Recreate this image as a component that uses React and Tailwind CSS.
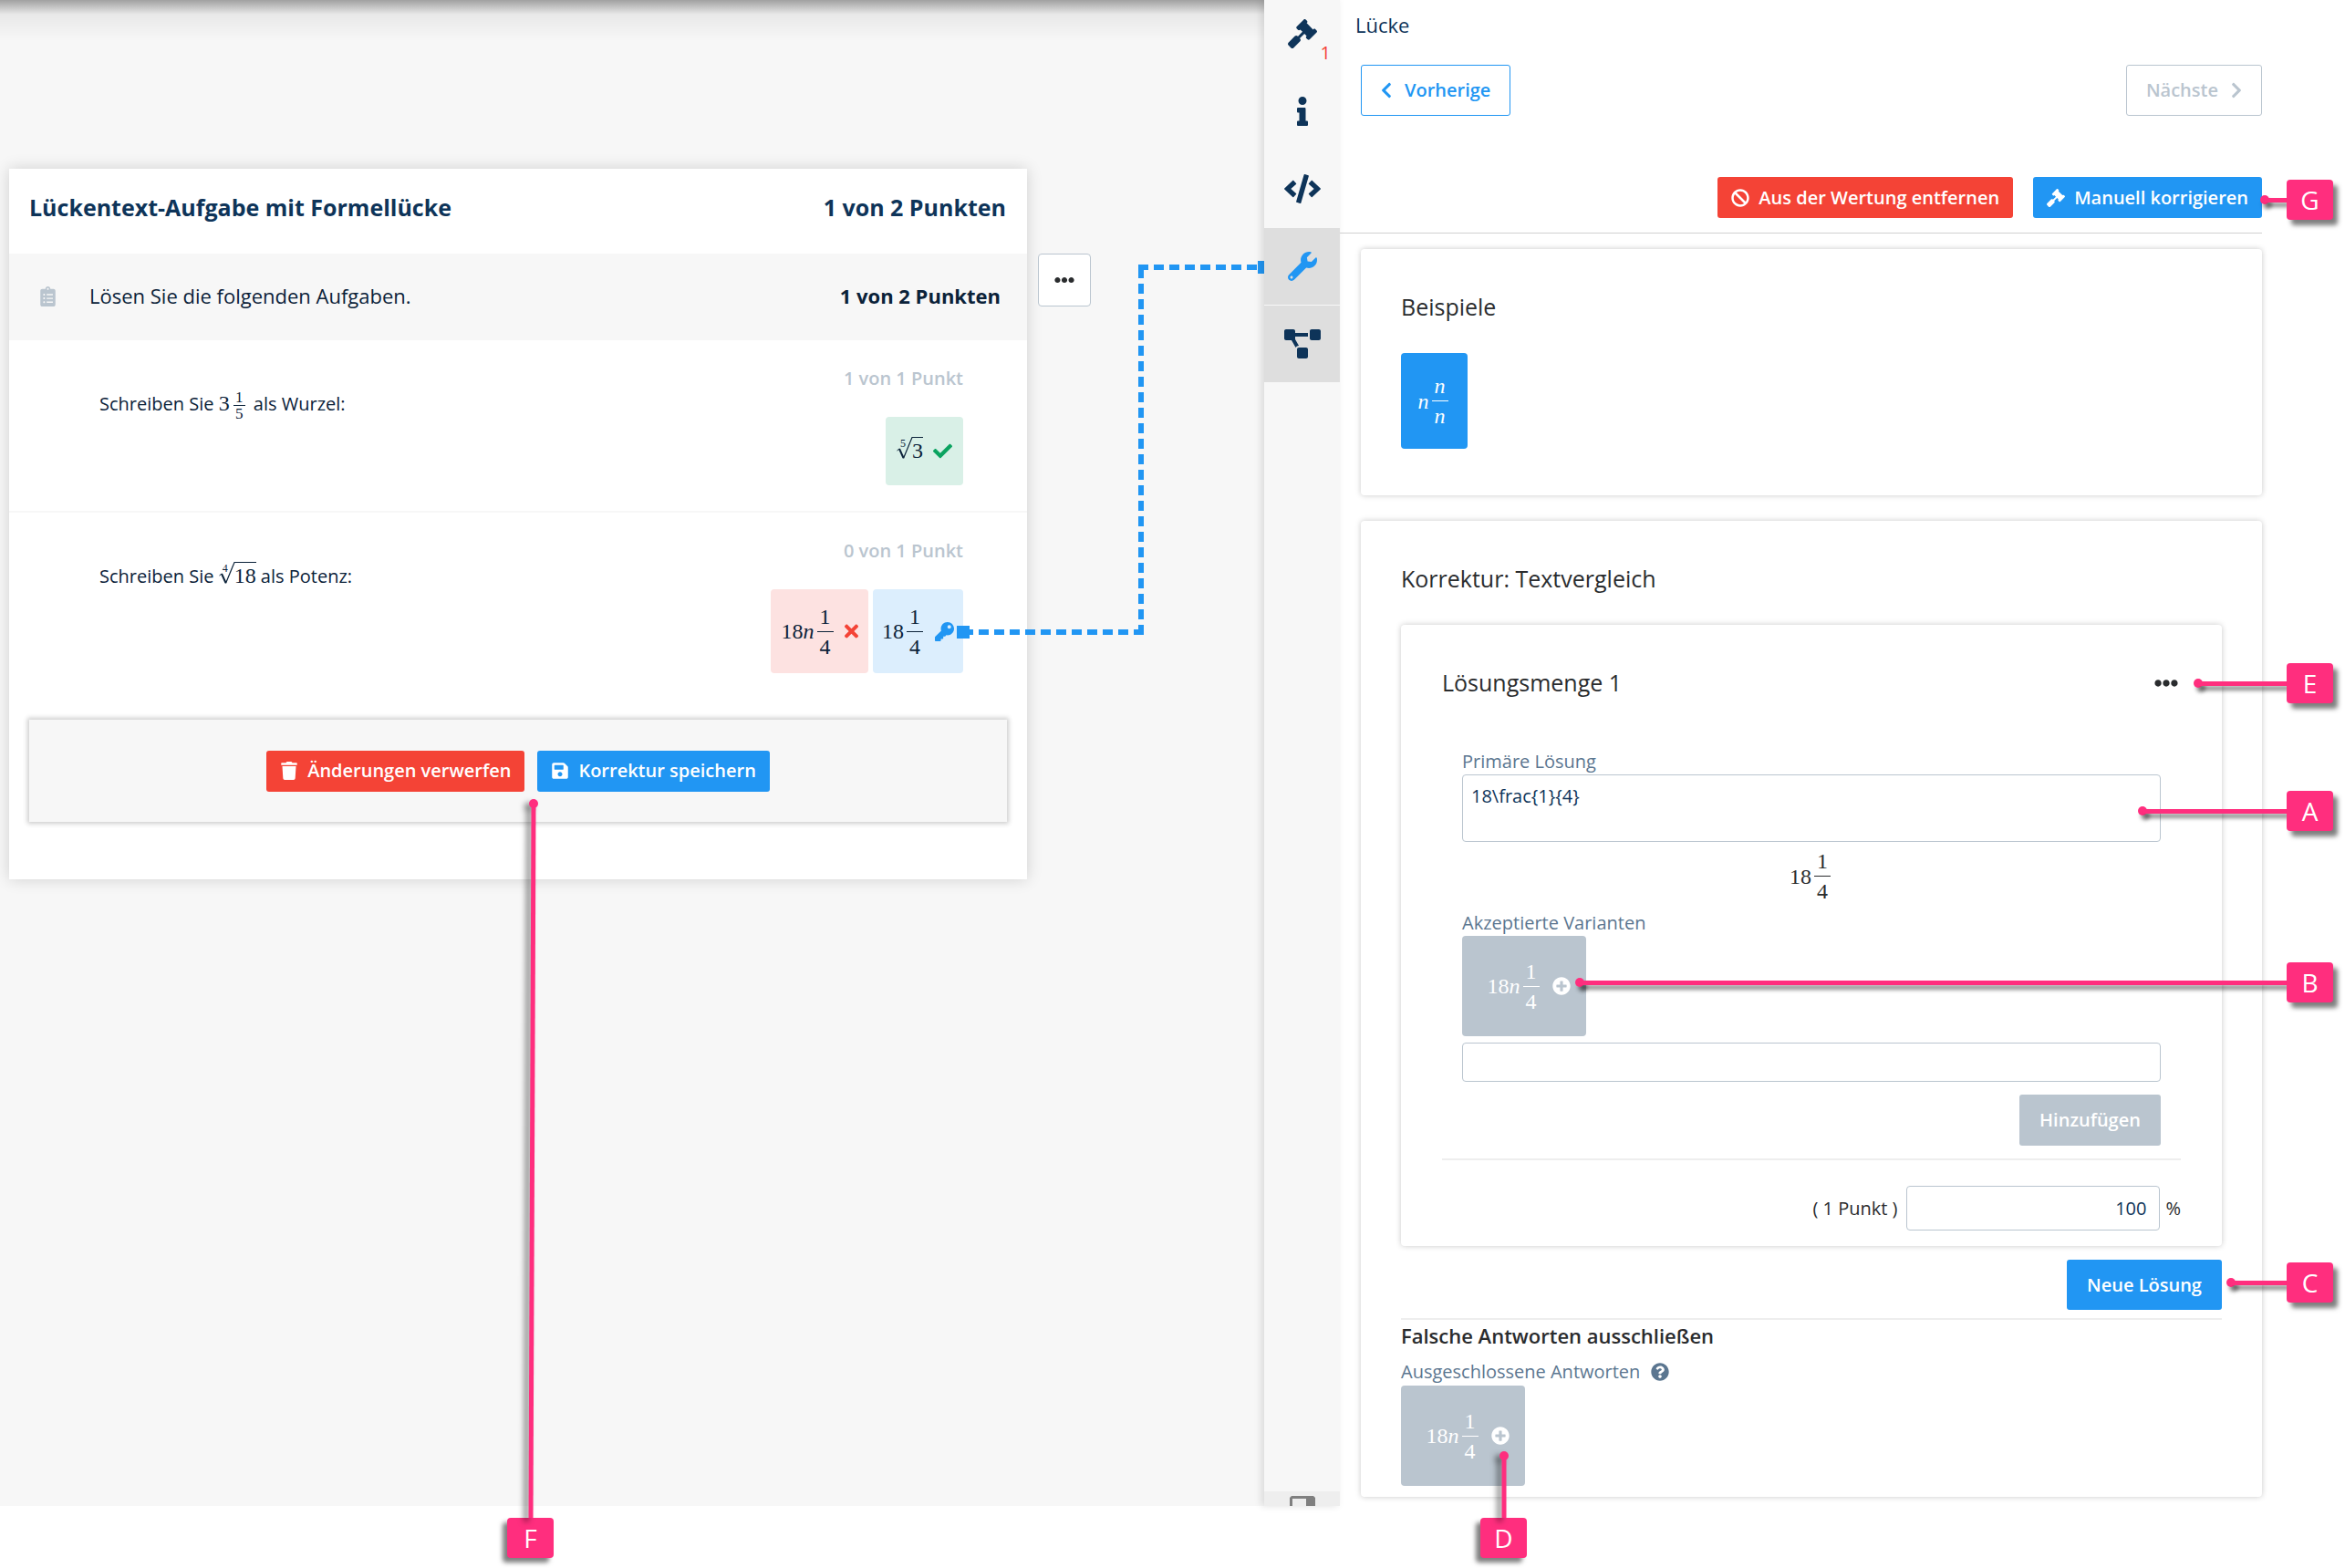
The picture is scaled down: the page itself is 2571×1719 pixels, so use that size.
import React from "react";
import {
  FaBan,
  FaCheck,
  FaChevronLeft,
  FaChevronRight,
  FaClipboardList,
  FaCode,
  FaEllipsisH,
  FaGavel,
  FaInfo,
  FaKey,
  FaPlusCircle,
  FaProjectDiagram,
  FaQuestionCircle,
  FaSave,
  FaTimes,
  FaTrash,
  FaWrench,
} from "react-icons/fa";

const Num = ({ children }) => (
  <span className="font-['Liberation_Serif',serif] text-[24px] leading-[24px]">{children}</span>
);

const Var = () => (
  <span className="font-['Liberation_Serif',serif] text-[24px] leading-[24px] italic">n</span>
);

const Frac = ({ top, bottom, small }) =>
  small ? (
    <span className="mx-1 inline-flex flex-col items-center align-middle font-['Liberation_Serif',serif] text-[17px] leading-[17px]">
      <span className="w-[13px] border-b border-current text-center">{top}</span>
      <span>{bottom}</span>
    </span>
  ) : (
    <span className="mx-[3px] flex flex-col items-center">
      <span className="w-[18px] border-b border-current pb-1 text-center leading-none">{top}</span>
      <span className="pt-1 leading-none">{bottom}</span>
    </span>
  );

const Root = ({ index, children }) => (
  <span className="relative inline-flex pl-[17px]">
    <svg
      className="absolute top-[-1px] left-0"
      width="18"
      height="26"
      viewBox="0 0 18 26"
      fill="none"
      stroke="currentColor"
    >
      <path d="M0.5 16 L3 14" strokeWidth="1" />
      <path d="M3 14 L7.5 24" strokeWidth="2" />
      <path d="M7.5 24.5 L17 1.5 H18" strokeWidth="1.2" />
    </svg>
    <span className="absolute top-px left-[4px] font-['Liberation_Serif',serif] text-[12px] leading-[12px]">
      {index}
    </span>
    <span className="border-t border-current">
      <Num>{children}</Num>
    </span>
  </span>
);

const Mixed = ({ variable }) => (
  <span className="flex items-center">
    <Num>18</Num>
    {variable && <Var />}
    <Frac top={<Num>1</Num>} bottom={<Num>4</Num>} />
  </span>
);

const Button = ({ color, icon, children }) => (
  <button
    className={`flex h-[45px] items-center gap-[10px] rounded-[3px] px-[15px] text-[20px] font-semibold text-white ${
      color === "red" ? "bg-[#f44336]" : "bg-[#2196f3]"
    }`}
  >
    {icon}
    {children}
  </button>
);

const Suggestion = () => (
  <button className="flex h-[110px] w-[136px] items-center justify-center gap-[11px] rounded-[4px] bg-[#bac5cf] pl-[10px] text-white">
    <Mixed variable />
    <FaPlusCircle className="size-5" />
  </button>
);

// pointer that ends in the margin right of the panel
const Callout = ({ letter, place, line }) => (
  <div className={`absolute right-[13px] z-10 flex items-center ${place}`}>
    <span className="-mr-[5px] size-[10px] rounded-full bg-[#ff2e7e] shadow-[3px_5px_4px_rgba(0,0,0,0.45)]" />
    <span className={`h-[5px] bg-[#ff2e7e] shadow-[3px_5px_4px_rgba(0,0,0,0.45)] ${line}`} />
    <span className="flex h-11 w-[51px] items-center justify-center rounded-[4px] bg-[#ff2e7e] text-[28px] leading-none text-white shadow-[5px_6px_5px_rgba(0,0,0,0.5)]">
      {letter}
    </span>
  </div>
);

// same, with the letter below; lean is how far the dot sits right of the letter
const CalloutDown = ({ letter, place, length, lean }) => (
  <div className={`absolute z-10 flex flex-col items-center ${place}`}>
    <svg
      width="30"
      height={length}
      className="overflow-visible drop-shadow-[-5px_4px_3px_rgba(0,0,0,0.5)]"
      stroke="#ff2e7e"
      strokeWidth="5"
    >
      <line x1={15 + lean} y1="5" x2="15" y2={length} />
      <circle cx={15 + lean} cy="5" r="5" fill="#ff2e7e" stroke="none" />
    </svg>
    <span className="flex h-11 w-[51px] items-center justify-center rounded-[4px] bg-[#ff2e7e] text-[28px] leading-none text-white shadow-[-5px_5px_5px_rgba(0,0,0,0.5)]">
      {letter}
    </span>
  </div>
);

const tabs = [
  { label: "Bewertung", icon: <FaGavel className="size-8" />, badge: "1" },
  { label: "Information", icon: <FaInfo className="size-8" /> },
  { label: "Quelltext", icon: <FaCode className="h-8 w-10" /> },
  { label: "Korrektur", icon: <FaWrench className="size-8" />, active: true },
  { label: "Struktur", icon: <FaProjectDiagram className="h-8 w-10" />, open: true },
];

const TaskCard = () => (
  <section className="mt-[185px] ml-[10px] w-[1116px] bg-white pb-[63px] shadow-[0_0_16px_rgba(0,0,0,0.16)]">
    <header className="flex h-[93px] items-center justify-between pr-[23px] pb-[8px] pl-[22px] text-[25px] font-bold text-[#0e3459]">
      <h1>Lückentext-Aufgabe mit Formellücke</h1>
      <span>1 von 2 Punkten</span>
    </header>
    <div className="flex h-[95px] items-center bg-[#f7f7f7] pr-[29px] pb-[2px] pl-[34px] text-[22px]">
      <FaClipboardList className="h-[22px] w-[17px] text-[#bac5cf]" />
      <p className="ml-[37px] flex-1">Lösen Sie die folgenden Aufgaben.</p>
      <span className="font-bold">1 von 2 Punkten</span>
    </div>
    <div className="flex h-[189px] justify-between border-b-2 border-[#f7f7f7] pr-[70px] pl-[99px] text-[20px]">
      <p className="pt-[54px]">
        Schreiben Sie <Num>3</Num>
        <Frac small top="1" bottom="5" /> als Wurzel:
      </p>
      <div className="flex flex-col items-end gap-[27px] pt-[27px]">
        <span className="font-semibold text-[#bac5cf]">1 von 1 Punkt</span>
        <span className="flex h-[75px] w-[85px] items-center justify-center gap-[11px] rounded-[4px] bg-[#d9f0e7]">
          <Root index="5">3</Root>
          <FaCheck className="size-[21px] text-[#0ba360]" />
        </span>
      </div>
    </div>
    <div className="flex h-[227px] justify-between pr-[70px] pl-[99px] text-[20px]">
      <p className="pt-[54px]">
        Schreiben Sie <Root index="4">18</Root> als Potenz:
      </p>
      <div className="flex flex-col items-end gap-[27px] pt-[27px]">
        <span className="font-semibold text-[#bac5cf]">0 von 1 Punkt</span>
        <div className="flex gap-[5px]">
          <span className="flex h-[92px] w-[107px] items-center justify-center gap-[9px] rounded-[4px] bg-[#fde2e1]">
            <Mixed variable />
            <FaTimes className="h-[22px] w-[15px] text-[#f44336]" />
          </span>
          <span className="flex h-[92px] w-[99px] items-center justify-center gap-[10px] rounded-[4px] bg-[#dceefd]">
            <Mixed />
            <FaKey className="size-[21px] text-[#2196f3]" />
          </span>
        </div>
      </div>
    </div>
    <footer className="mx-[22px] flex h-[112px] items-center justify-center gap-[14px] bg-[#f7f7f7] shadow-[0_0_5px_2px_rgba(0,0,0,0.2)]">
      <Button color="red" icon={<FaTrash className="size-5" />}>
        Änderungen verwerfen
      </Button>
      <Button icon={<FaSave className="size-5" />}>Korrektur speichern</Button>
    </footer>
  </section>
);

const SolutionCard = () => (
  <section className="rounded-[4px] bg-white px-[45px] pb-[17px] shadow-[0_0_6px_rgba(0,0,0,0.22)]">
    <div className="flex h-[130px] items-center justify-between pr-[3px] pb-[2px]">
      <h3 className="text-[25px]">Lösungsmenge 1</h3>
      <button aria-label="Mehr">
        <FaEllipsisH className="size-[26px]" />
      </button>
    </div>
    <div className="flex flex-col px-[22px] text-[20px]">
      <label htmlFor="primary" className="mt-[6px] leading-[28px] text-[#5b7690]">
        Primäre Lösung
      </label>
      <textarea
        id="primary"
        className="h-[74px] resize-none rounded-[4px] border border-[#bac5cf] px-[9px] py-[8px] text-[#0e3459]"
        defaultValue="18\frac{1}{4}"
      />
      <div className="flex h-[75px] items-center justify-center">
        <Mixed />
      </div>
      <label htmlFor="variant" className="leading-[28px] text-[#5b7690]">
        Akzeptierte Varianten
      </label>
      <Suggestion />
      <input id="variant" className="mt-[7px] h-[43px] rounded-[4px] border border-[#bac5cf] px-[9px]" />
      <button className="mt-[14px] h-[56px] w-[155px] self-end rounded-[3px] bg-[#bac5cf] font-semibold text-white">
        Hinzufügen
      </button>
    </div>
    <div className="mt-[14px] flex items-center justify-end gap-[6px] border-t-2 border-[#eeeeee] pt-[28px] text-[20px]">
      <label htmlFor="percent">( 1 Punkt )</label>
      <input
        id="percent"
        className="ml-1 h-[49px] w-[278px] rounded-[4px] border border-[#bac5cf] px-[14px] text-right text-[#0e3459]"
        defaultValue="100"
      />
      <span>%</span>
    </div>
  </section>
);

const CorrectionPanel = () => (
  <div className="min-w-0 flex-1 pr-[91px] pb-[10px] text-[#2a2c2e]">
    <h2 className="pt-[12px] pl-[17px] text-[22px] leading-[30px] text-[#0e3459]">Lücke</h2>
    <div className="mt-[29px] flex justify-between pl-[23px] text-[20px] font-semibold">
      <button className="flex h-[56px] items-center gap-[14px] rounded-[3px] border border-[#2196f3] px-[21px] text-[#2196f3]">
        <FaChevronLeft className="h-5 w-3" />
        Vorherige
      </button>
      <button
        disabled
        className="flex h-[56px] items-center gap-[14px] rounded-[3px] border border-[#bac5cf] px-[21px] text-[#bac5cf]"
      >
        Nächste
        <FaChevronRight className="h-5 w-3" />
      </button>
    </div>
    <div className="mt-[67px] flex justify-end gap-[22px] border-b border-[#d0d0d0] pb-[16px]">
      <Button color="red" icon={<FaBan className="size-5" />}>
        Aus der Wertung entfernen
      </Button>
      <Button icon={<FaGavel className="size-5" />}>Manuell korrigieren</Button>
    </div>
    <div className="mt-[17px] flex flex-col gap-[28px] pl-[23px]">
      <section className="h-[270px] rounded-[4px] bg-white px-[44px] pt-[46px] shadow-[0_0_6px_rgba(0,0,0,0.22)]">
        <h3 className="text-[25px] leading-[34px]">Beispiele</h3>
        <button className="mt-[34px] flex h-[105px] w-[73px] items-center justify-center rounded-[4px] bg-[#2196f3] text-white">
          <Var />
          <Frac top={<Var />} bottom={<Var />} />
        </button>
      </section>
      <section className="rounded-[4px] bg-white px-[44px] pt-[46px] pb-[12px] shadow-[0_0_6px_rgba(0,0,0,0.22)]">
        <h3 className="mb-[34px] text-[25px] leading-[34px]">Korrektur: Textvergleich</h3>
        <SolutionCard />
        <div className="mt-[15px] flex justify-end border-b-2 border-[#eeeeee] pb-[9px]">
          <button className="h-[55px] w-[170px] rounded-[3px] bg-[#2196f3] text-[20px] font-semibold text-white">
            Neue Lösung
          </button>
        </div>
        <h4 className="mt-px text-[22px] leading-[32px] font-semibold">Falsche Antworten ausschließen</h4>
        <p className="mt-[10px] mb-px flex items-center gap-[12px] text-[20px] leading-[28px] text-[#5b7690]">
          Ausgeschlossene Antworten
          <FaQuestionCircle className="size-5" />
        </p>
        <Suggestion />
      </section>
    </div>
  </div>
);

const App = () => {
  return (
    <div className="relative grid grid-cols-[1386fr_1185fr] bg-white pb-[68px] font-['Open_Sans',sans-serif] text-[#0b2239]">
      <main className="relative bg-[#f7f7f7]">
        <div className="absolute inset-x-0 top-0 h-[45px] bg-linear-to-b from-black/35 via-black/6 via-35% to-transparent" />
        <div className="flex items-start gap-[12px]">
          <TaskCard />
          <button
            aria-label="Optionen"
            className="mt-[278px] flex size-[58px] items-center justify-center rounded-[4px] border border-[#bac5cf] bg-white text-[#2a2c2e]"
          >
            <FaEllipsisH className="size-[22px]" />
          </button>
        </div>
        <svg
          className="absolute top-[280px] right-0"
          width="338"
          height="424"
          viewBox="0 0 338 424"
          fill="none"
          stroke="#2196f3"
          strokeWidth="6"
        >
          <path d="M8 413 H203" strokeDasharray="11 6" />
          <path d="M203 416 V10" strokeDasharray="11 6" />
          <path d="M200 13 H338" strokeDasharray="11 6" />
          <rect x="1" y="406" width="14" height="14" fill="#2196f3" stroke="none" />
          <rect x="331" y="6" width="14" height="14" fill="#2196f3" stroke="none" />
        </svg>
        <CalloutDown letter="F" place="top-[876px] left-[556px]" length={788} lean={3} />
      </main>

      <aside className="relative flex">
        <nav className="flex w-[83px] shrink-0 flex-col bg-[#f7f7f7] text-[#0e3459] shadow-[-3px_0_8px_rgba(0,0,0,0.12)]">
          <div className="-mt-[5px] flex flex-col">
            {tabs.map((tab) => (
              <button
                key={tab.label}
                aria-label={tab.label}
                className={`relative flex h-[85px] items-center justify-center border-b border-[#f7f7f7] ${
                  tab.active ? "bg-[#dedede] text-[#2196f3]" : tab.open ? "bg-[#dedede]" : ""
                }`}
              >
                {tab.icon}
                {tab.badge && (
                  <span className="absolute right-[10px] bottom-[6px] text-[20px] text-[#f44336]">{tab.badge}</span>
                )}
              </button>
            ))}
          </div>
          <button
            aria-label="Seitenleiste"
            className="mt-auto flex h-[16px] items-end justify-center bg-[#eeeeee] text-[#808080]"
          >
            <svg width="28" height="11" viewBox="0 0 28 11" fill="currentColor">
              <path d="M2 0 H26 L28 2 V11 H18 V3 H3 V11 H0 V2 Z" />
            </svg>
          </button>
        </nav>
        <CorrectionPanel />
        <Callout letter="G" place="top-[197px]" line="w-[24px]" />
        <Callout letter="E" place="top-[727px]" line="w-[97px]" />
        <Callout letter="A" place="top-[867px]" line="w-[158px]" />
        <Callout letter="B" place="top-[1055px]" line="w-[775px]" />
        <Callout letter="C" place="top-[1384px]" line="w-[61px]" />
        <CalloutDown letter="D" place="top-[1591px] right-[897px]" length={73} lean={0} />
      </aside>
    </div>
  );
};

export default App;
